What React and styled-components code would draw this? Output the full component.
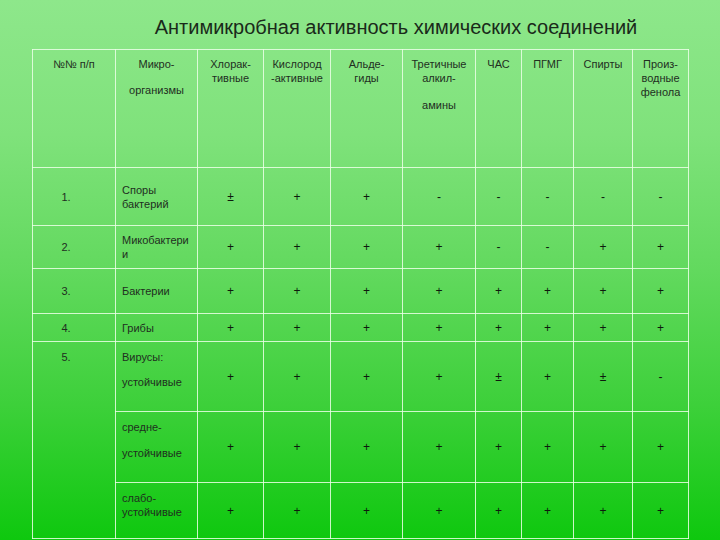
import styled, { createGlobalStyle } from "styled-components";

const GlobalStyle = createGlobalStyle`
  html, body {
    margin: 0;
    padding: 0;
  }
  body {
    font-family: "Liberation Sans", Arial, sans-serif;
  }
`;

const Slide = styled.div`
  width: 720px;
  height: 540px;
  overflow: hidden;
  background: linear-gradient(
    to bottom,
    #8ee78b 0%,
    #7fe27b 25%,
    #62d95e 50%,
    #3dd03a 75%,
    #0ec80e 100%
  );
  display: flex;
  flex-direction: column;
`;

const Title = styled.h1`
  margin: 0;
  height: 49px;
  box-sizing: border-box;
  padding: 15px 0 0 72px;
  text-align: center;
  font-family: "Liberation Sans", Arial, sans-serif;
  font-weight: normal;
  font-size: 20px;
  line-height: 24px;
  color: #1a2a1a;
`;

const Frame = styled.div`
  padding-left: 32px;
`;

const Table = styled.table`
  width: 656px;
  border-collapse: collapse;
  table-layout: fixed;
  font-size: 11px;
  color: #1f2f1f;

  td,
  th {
    border: 1px solid rgba(235, 255, 230, 0.85);
    padding: 0;
  }
`;

const Col = styled.col`
  width: ${(p) => p.$w}px;
`;

const Row = styled.tr`
  height: ${(p) => p.$h}px;
`;

const Head = styled.th`
  font-weight: normal;
  vertical-align: top;
  text-align: center;
  padding: 7px 2px 0 !important;
  line-height: 14px;
`;

const Line = styled.div`
  margin-top: ${(p) => p.$gap || 0}px;
`;

const Num = styled.td`
  text-align: center;
  padding-right: 16px !important;
  vertical-align: ${(p) => (p.$top ? "top" : "middle")};
  padding-top: ${(p) => (p.$top ? "8px" : "0")} !important;
  line-height: 14px;
`;

const Name = styled.td`
  text-align: left;
  padding-left: 6px !important;
  vertical-align: ${(p) => (p.$top ? "top" : "middle")};
  padding-top: ${(p) => (p.$top ? "8px" : "0")} !important;
  line-height: 14px;
`;

const Mark = styled.td`
  text-align: center;
  vertical-align: middle;
  color: #0d1a0d;
  font-size: 12px;
`;

const widths = [83, 82, 66, 67, 72, 73, 46, 52, 59, 56];

const headers = [
  [["№№ п/п"]],
  [["Микро-"], ["организмы", 12]],
  [["Хлорак-"], ["тивные"]],
  [["Кислород"], ["-активные"]],
  [["Альде-"], ["гиды"]],
  [["Третичные"], ["алкил-"], ["амины", 13]],
  [["ЧАС"]],
  [["ПГМГ"]],
  [["Спирты"]],
  [["Произ-"], ["водные"], ["фенола"]],
];

const rows = [
  { h: 58, num: "1.", name: [["Споры"], ["бактерий"]], marks: "±++-----" },
  { h: 43, num: "2.", name: [["Микобактери"], ["и"]], marks: "++++--++" },
  { h: 45, num: "3.", name: [["Бактерии"]], marks: "++++++++" },
  { h: 28, num: "4.", name: [["Грибы"]], marks: "++++++++" },
  {
    h: 70,
    num: "5.",
    span: 3,
    top: true,
    name: [["Вирусы:"], ["устойчивые", 11]],
    marks: "++++±+±-",
  },
  { h: 71, top: true, name: [["средне-"], ["устойчивые", 12]], marks: "++++++++" },
  { h: 56, top: true, name: [["слабо-"], ["устойчивые"]], marks: "++++++++" },
];

const Lines = ({ items }) =>
  items.map(([text, gap], i) => (
    <Line key={i} $gap={gap}>
      {text}
    </Line>
  ));

export default function App() {
  return (
    <>
      <GlobalStyle />
      <Slide>
        <Title>Антимикробная активность химических соединений</Title>
        <Frame>
          <Table>
            <colgroup>
              {widths.map((w, i) => (
                <Col key={i} $w={w} />
              ))}
            </colgroup>
            <thead>
              <Row $h={118}>
                {headers.map((h, i) => (
                  <Head key={i}>
                    <Lines items={h} />
                  </Head>
                ))}
              </Row>
            </thead>
            <tbody>
              {rows.map((r, i) => (
                <Row key={i} $h={r.h}>
                  {r.num && (
                    <Num rowSpan={r.span || 1} $top={r.top}>
                      {r.num}
                    </Num>
                  )}
                  <Name $top={r.top}>
                    <Lines items={r.name} />
                  </Name>
                  {r.marks.split("").map((m, j) => (
                    <Mark key={j}>{m}</Mark>
                  ))}
                </Row>
              ))}
            </tbody>
          </Table>
        </Frame>
      </Slide>
    </>
  );
}
